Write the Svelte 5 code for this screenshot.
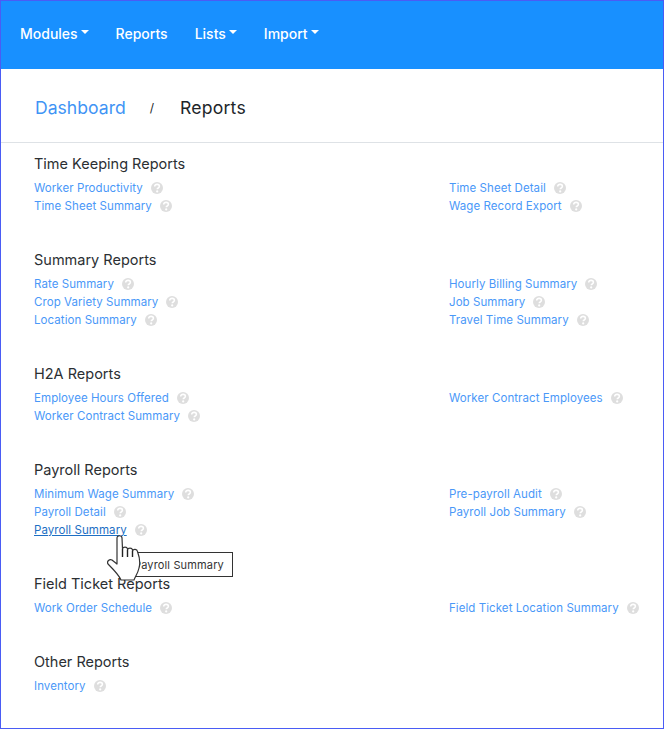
<script>
    const sections = [
        { title: 'Time Keeping Reports', left: ['Worker Productivity', 'Time Sheet Summary'], right: ['Time Sheet Detail', 'Wage Record Export'] },
        { title: 'Summary Reports', left: ['Rate Summary', 'Crop Variety Summary', 'Location Summary'], right: ['Hourly Billing Summary', 'Job Summary', 'Travel Time Summary'] },
        { title: 'H2A Reports', left: ['Employee Hours Offered', 'Worker Contract Summary'], right: ['Worker Contract Employees'] },
        { title: 'Payroll Reports', left: ['Minimum Wage Summary', 'Payroll Detail', 'Payroll Summary'], right: ['Pre-payroll Audit', 'Payroll Job Summary'] },
        { title: 'Field Ticket Reports', left: ['Work Order Schedule'], right: ['Field Ticket Location Summary'] },
        { title: 'Other Reports', left: ['Inventory'], right: [] }
    ];
    const nav = [
        { label: 'Modules', caret: true },
        { label: 'Reports', caret: false },
        { label: 'Lists', caret: true },
        { label: 'Import', caret: true }
    ];
</script>

{#snippet report(name)}
    <li>
        <a href="#top" class:hover={name === 'Payroll Summary'}>{name}</a>
        <svg class="help" viewBox="0 0 12 12" aria-hidden="true">
            <circle cx="6" cy="6" r="6" fill="#dedede" />
            <path d="M3.700 4.500c0-1.300 1-2.100 2.400-2.100s2.300.8 2.300 1.900c0 1-.7 1.400-1.200 1.700-.6.3-.9.6-.9 1.200" fill="none" stroke="#fff" stroke-width="1.600" />
            <circle cx="6.200" cy="9.400" r="1.100" fill="#fff" />
        </svg>
    </li>
{/snippet}

<div class="frame">
    <nav class="navbar">
        {#each nav as item}
            <a href="#top" class="nav-link">
                {item.label}
                {#if item.caret}<span class="caret"></span>{/if}
            </a>
        {/each}
    </nav>

    <div class="breadcrumb">
        <a href="#top">Dashboard</a>
        <span class="sep">/</span>
        <span class="current">Reports</span>
    </div>

    <main class="content">
        {#each sections as section}
            <section>
                <h2>{section.title}</h2>
                <div class="columns">
                    <ul>
                        {#each section.left as name}
                            {@render report(name)}
                        {/each}
                    </ul>
                    <ul>
                        {#each section.right as name}
                            {@render report(name)}
                        {/each}
                    </ul>
                </div>
            </section>
        {/each}
    </main>

    <div class="tooltip">Payroll Summary</div>

    <svg class="cursor" viewBox="0 0 34 46" aria-hidden="true">
        <path d="M10 3C10 0 15 0 15 3L15.500 14C16 11.500 20 11.500 20.500 14V15C21 12.500 25 12.500 25.500 15V16C26.500 13.500 30 14 30.500 16.500C32.500 22 33.500 28 32 33C31 38 28 42 27 45H14C12 40 8 36 1 29C-.5 26.500 2.500 23.500 5 25L10 29Z" fill="#fff" stroke="#333" stroke-width="1.200" stroke-linejoin="round" />
        <path d="M15.500 14V22M20.500 15V22M25.500 16V22" fill="none" stroke="#222" stroke-width="1.400" />
    </svg>
</div>

<style>
    :global(body) {
        margin: 0;
        background: #fff;
    }

    .frame {
        position: relative;
        box-sizing: border-box;
        width: 664px;
        height: 729px;
        border: 1px solid #4a5cf5;
        overflow: hidden;
        font-family: Inter, "Open Sans", sans-serif;
        color: #212529;
    }

    .navbar {
        display: flex;
        gap: 27px;
        height: 68px;
        align-items: center;
        padding: 0 19px 4px;
        box-sizing: border-box;
        background: #1890ff;
    }

    .nav-link {
        display: flex;
        align-items: center;
        gap: 3px;
        color: #fff;
        font-size: 14px;
        font-weight: 500;
        text-decoration: none;
    }

    .caret {
        width: 0;
        height: 0;
        margin-bottom: 2px;
        border-left: 4.500px solid transparent;
        border-right: 4.500px solid transparent;
        border-top: 4.500px solid #fff;
    }

    .breadcrumb {
        display: flex;
        align-items: center;
        box-sizing: border-box;
        height: 74px;
        padding: 3px 0 0 34px;
        border-bottom: 1px solid #dee2e6;
        font-size: 17.600px;
    }

    .breadcrumb a {
        color: #3f94f5;
        text-decoration: none;
    }

    .sep {
        margin: 0 26px 0 24px;
        font-size: 12px;
    }

    .current {
        letter-spacing: .2px;
    }

    .content {
        padding: 12px 0 0 33px;
    }

    section {
        margin-bottom: 36px;
    }

    h2 {
        margin: 0 0 6px;
        font-size: 14.500px;
        line-height: 18px;
        font-weight: 400;
        color: #2b2f33;
    }

    .columns {
        display: grid;
        grid-template-columns: 415px 1fr;
    }

    ul {
        margin: 0;
        padding: 0;
        list-style: none;
    }

    li {
        display: flex;
        align-items: center;
        gap: 8px;
        height: 18px;
        font-size: 11.500px;
        letter-spacing: .07px;
    }

    li a {
        color: #4a98f8;
        text-decoration: none;
    }

    li a.hover {
        color: #1d6fc4;
        text-decoration: underline;
    }

    .help {
        width: 12px;
        height: 12px;
    }

    .tooltip {
        position: absolute;
        left: 124px;
        top: 551px;
        box-sizing: border-box;
        width: 108px;
        height: 25px;
        padding-left: 8px;
        border: 1px solid #333;
        background: #fff;
        font-size: 11px;
        letter-spacing: .15px;
        line-height: 24px;
        color: #333;
    }

    .cursor {
        position: absolute;
        left: 106px;
        top: 534px;
        width: 34px;
        height: 46px;
    }
</style>
